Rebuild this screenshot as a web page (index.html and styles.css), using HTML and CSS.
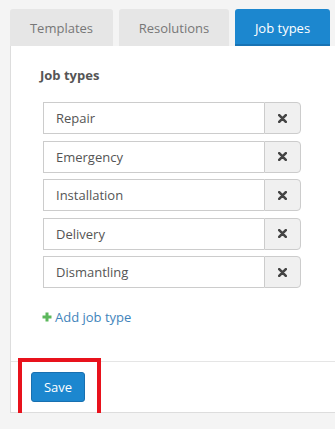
FILE: index.html
```html
<!DOCTYPE html>
<html lang="en">
<head>
    <meta charset="UTF-8">
    <meta name="viewport" content="width=device-width, initial-scale=1.0">
    <title>Job types</title>
    <link rel="stylesheet" href="styles.css">
</head>
<body>

    <div class="page">
        <div class="tabs">
            <div class="tab tab-templates">Templates</div>
            <div class="tab tab-resolutions">Resolutions</div>
            <div class="tab tab-jobs active">Job types</div>
        </div>

        <div class="panel">
            <div class="panel-body">
                <div class="title">Job types</div>
                <div class="rows">
                    <div class="row">
                        <input class="field" type="text" value="Repair">
                        <button class="remove"><svg width="9" height="9" viewBox="0 0 9 9"><path d="M1.2 1.2 L7.8 7.8 M7.8 1.2 L1.2 7.8" stroke="#444" stroke-width="2.6" stroke-linecap="round"/></svg></button>
                    </div>
                    <div class="row">
                        <input class="field" type="text" value="Emergency">
                        <button class="remove"><svg width="9" height="9" viewBox="0 0 9 9"><path d="M1.2 1.2 L7.8 7.8 M7.8 1.2 L1.2 7.8" stroke="#444" stroke-width="2.6" stroke-linecap="round"/></svg></button>
                    </div>
                    <div class="row">
                        <input class="field" type="text" value="Installation">
                        <button class="remove"><svg width="9" height="9" viewBox="0 0 9 9"><path d="M1.2 1.2 L7.8 7.8 M7.8 1.2 L1.2 7.8" stroke="#444" stroke-width="2.6" stroke-linecap="round"/></svg></button>
                    </div>
                    <div class="row">
                        <input class="field" type="text" value="Delivery">
                        <button class="remove"><svg width="9" height="9" viewBox="0 0 9 9"><path d="M1.2 1.2 L7.8 7.8 M7.8 1.2 L1.2 7.8" stroke="#444" stroke-width="2.6" stroke-linecap="round"/></svg></button>
                    </div>
                    <div class="row">
                        <input class="field" type="text" value="Dismantling">
                        <button class="remove"><svg width="9" height="9" viewBox="0 0 9 9"><path d="M1.2 1.2 L7.8 7.8 M7.8 1.2 L1.2 7.8" stroke="#444" stroke-width="2.6" stroke-linecap="round"/></svg></button>
                    </div>
                </div>
                <a class="add" href="#"><svg class="plus" width="10" height="10" viewBox="0 0 10 10"><path d="M5 0.5 V9.5 M0.5 5 H9.5" stroke="#5cb85c" stroke-width="3"/></svg>Add job type</a>
            </div>
            <div class="panel-footer">
                <button class="save">Save</button>
            </div>
        </div>

        <div class="highlight"></div>
    </div>

</body>
</html>
```

FILE: styles.css
```css
/* General */
body {
    margin: 0;
    background: #f4f4f4;
    font-family: 'Open Sans', 'Noto Sans', sans-serif;
    font-size: 13px;
    color: #555;
    overflow: hidden;
}

.page {
    position: relative;
    padding: 9px 0 0 10px;
}

/* Tabs */
.tabs {
    display: flex;
    gap: 6px;
}

.tab {
    height: 37px;
    box-sizing: border-box;
    display: flex;
    align-items: center;
    justify-content: center;
    background: #e6e6e6;
    color: #777;
    border-radius: 3px 3px 0 0;
    font-size: 13px;
}

.tab-templates { width: 103px; }
.tab-resolutions { width: 110px; }
.tab-jobs { width: 95px; }

.tab.active {
    background: #1c87cf;
    color: #fff;
    border-bottom: 2px solid #1873b4;
    padding-top: 2px;
}

/* Panel */
.panel {
    background: #fff;
    border-left: 1px solid #ddd;
    border-bottom: 1px solid #ddd;
}

.panel-body {
    padding: 20px 0 35px 29px;
}

.title {
    font-weight: bold;
    color: #555;
    line-height: 18px;
    margin-bottom: 18px;
}

.rows {
    display: flex;
    flex-direction: column;
    gap: 6.5px;
    width: 258px;
    margin-left: 3px;
}

.row {
    display: flex;
    height: 32px;
}

.field {
    flex: 1;
    min-width: 0;
    box-sizing: border-box;
    height: 32px;
    border: 1px solid #ccc;
    border-right: none;
    border-radius: 0;
    padding: 0 12px;
    font-family: inherit;
    font-size: 13px;
    color: #555;
    outline: none;
}

.remove {
    width: 37px;
    height: 32px;
    box-sizing: border-box;
    border: 1px solid #ccc;
    border-radius: 0 4px 4px 0;
    background: #f0f0f0;
    padding: 0;
    display: flex;
    align-items: center;
    justify-content: center;
}

/* Add link */
.add {
    display: inline-flex;
    align-items: center;
    margin-top: 20px;
    margin-left: 2px;
    line-height: 18px;
    color: #3f84bb;
    text-decoration: none;
}

.plus {
    margin-right: 3px;
}

/* Footer */
.panel-footer {
    border-top: 1px solid #e5e5e5;
    padding: 10px 0 10px 20px;
}

.save {
    width: 54px;
    height: 30px;
    background: #1c87cf;
    border: 1px solid #1870b0;
    border-radius: 3px;
    color: #fff;
    font-family: inherit;
    font-size: 13px;
    padding: 0;
}

/* Annotation */
.highlight {
    position: absolute;
    left: 18px;
    top: 358px;
    width: 83px;
    height: 63px;
    box-sizing: border-box;
    border: 4px solid #e8121c;
}
```
